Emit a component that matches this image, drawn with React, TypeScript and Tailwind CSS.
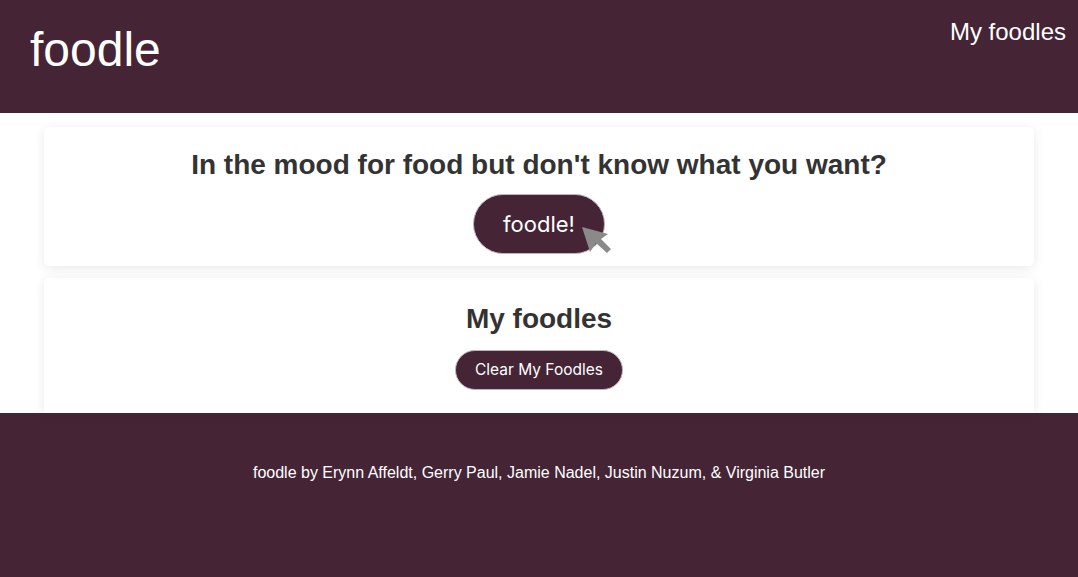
export default function App() {
  return (
    <div className="min-h-[577px] bg-white font-['Liberation_Sans',Arial,sans-serif]">
      {/* Header */}
      <header className="h-[113px] bg-[#452535] flex items-start justify-between text-white">
        <h1 className="pl-[30px] pt-[22px] text-[48px] leading-[56px]">foodle</h1>
        <a className="pr-[12px] pt-[18px] text-[24px] leading-[28px]">My foodles</a>
      </header>

      <main className="px-[44px] pt-[14px] flex flex-col gap-[12px]">
        <section className="bg-white rounded-[5px] shadow-[0_2px_12px_rgba(0,0,0,0.09)] h-[139px] flex flex-col items-center pt-[22px]">
          <h2 className="text-[28px] leading-[32px] font-bold text-[#333]">
            In the mood for food but don't know what you want?
          </h2>
          <div className="relative mt-[13px]">
            <button className="w-[132px] h-[60px] rounded-full bg-[#452535] border border-[#bdb5b9] text-white text-[22px] font-['Inter',sans-serif]">
              foodle!
            </button>
            {/* mouse pointer caught in the screenshot */}
            <svg
              className="absolute left-[107px] top-[31px]"
              width="34"
              height="30"
              viewBox="0 0 34 30"
            >
              <path d="M2 2 L28 9 L21 14 L31 24 L27 28 L16 18 L10 27 Z" fill="#8a8a8a" />
            </svg>
          </div>
        </section>

        <section className="bg-white rounded-t-[5px] shadow-[0_2px_12px_rgba(0,0,0,0.09)] h-[135px] flex flex-col items-center pt-[25px]">
          <h2 className="text-[28px] leading-[32px] font-bold text-[#333]">My foodles</h2>
          <button className="mt-[15px] w-[168px] h-[40px] rounded-full bg-[#452535] border border-[#bdb5b9] text-white text-[15.5px] font-['Inter',sans-serif]">
            Clear My Foodles
          </button>
        </section>
      </main>

      {/* Footer */}
      <footer className="h-[164px] bg-[#452535] text-white text-center pt-[50px]">
        <p className="text-[16px] leading-[20px]">
          foodle by Erynn Affeldt, Gerry Paul, Jamie Nadel, Justin Nuzum, &amp; Virginia Butler
        </p>
      </footer>
    </div>
  );
}
